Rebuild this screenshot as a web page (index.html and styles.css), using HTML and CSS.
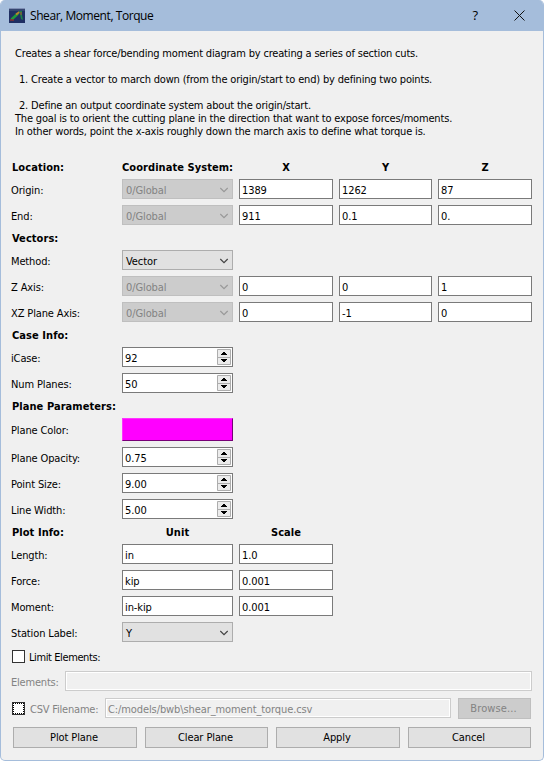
FILE: index.html
```
<!DOCTYPE html>
<html lang="en">
<head>
<meta charset="utf-8">
<title>Shear, Moment, Torque</title>
<link rel="stylesheet" href="styles.css">
</head>
<body>
<svg width="0" height="0" class="defs">
  <symbol id="chev" viewBox="0 0 10 6"><path d="M1.300 1 5 4.700 8.700 1" fill="none" stroke="currentColor" stroke-width="1.200"/></symbol>
  <symbol id="spin" viewBox="0 0 14 16"><path d="M.5.5h13v15H.5zM1 8.5h12" fill="#ececec" stroke="#adadad"/><path d="M6 3h2v1h1v1h1v1H4V5h1V4h1zM4 10h6v1H9v1H8v1H6v-1H5v-1H4z" fill="#000"/></symbol>
</svg>
<div class="window">
  <header class="titlebar">
    <svg class="appicon" width="16" height="15" viewBox="0 0 16 15"><path fill="#1f2f63" d="M0 0h16v15H0z"/><path fill="#7f8fb4" d="M0 0h16v1H0z"/><path fill="#34456f" d="M0 1h16v2H0z"/><path d="M2.500 11.500 9 5.500" stroke="#1f9a3c" stroke-width="2.500"/><path d="M1 12h4" stroke="#8d3030" stroke-width="1.500"/><path d="M7 6.500 10.500 4" stroke="#b9852a" stroke-width="2"/><path d="M10 3h3v4l1 5-2-1-1-5z" fill="#1c8048"/><path d="M12 4v3" stroke="#b04a2c"/></svg>
    <h1>Shear, Moment, Torque</h1>
    <span class="help">?</span>
    <svg class="close" width="11" height="11" viewBox="0 0 11 11"><path d="M.5.5l10 10M10.5.5l-10 10" stroke="#111" fill="none"/></svg>
  </header>
  <section class="intro">
    <p class="l1">Creates a shear force/bending moment diagram by creating a series of section cuts.</p>
    <p class="step">1. Create a vector to march down (from the origin/start to end) by defining two points.</p>
    <p class="step">2. Define an output coordinate system about the origin/start.</p>
    <p>The goal is to orient the cutting plane in the direction that want to expose forces/moments.</p>
    <p>In other words, point the x-axis roughly down the march axis to define what torque is.</p>
  </section>
  <main class="form">
    <div class="row head"><b>Location:</b><b class="cs">Coordinate System:</b><b class="c">X</b><b class="c">Y</b><b class="c">Z</b></div>
    <div class="row"><label>Origin:</label><div class="combo off">0/Global<svg><use href="#chev"/></svg></div><div class="field">1389</div><div class="field">1262</div><div class="field">87</div></div>
    <div class="row"><label>End:</label><div class="combo off">0/Global<svg><use href="#chev"/></svg></div><div class="field">911</div><div class="field">0.1</div><div class="field">0.</div></div>
    <div class="row head"><b>Vectors:</b></div>
    <div class="row"><label>Method:</label><div class="combo">Vector<svg><use href="#chev"/></svg></div></div>
    <div class="row"><label>Z Axis:</label><div class="combo off">0/Global<svg><use href="#chev"/></svg></div><div class="field">0</div><div class="field">0</div><div class="field">1</div></div>
    <div class="row"><label>XZ Plane Axis:</label><div class="combo off">0/Global<svg><use href="#chev"/></svg></div><div class="field">0</div><div class="field">-1</div><div class="field">0</div></div>
    <div class="row head"><b>Case Info:</b></div>
    <div class="row"><label>iCase:</label><div class="field spin">92<svg><use href="#spin"/></svg></div></div>
    <div class="row"><label>Num Planes:</label><div class="field spin">50<svg><use href="#spin"/></svg></div></div>
    <div class="row head"><b>Plane Parameters:</b></div>
    <div class="row tall"><label>Plane Color:</label><div class="swatch"></div></div>
    <div class="row"><label>Plane Opacity:</label><div class="field spin">0.75<svg><use href="#spin"/></svg></div></div>
    <div class="row"><label>Point Size:</label><div class="field spin">9.00<svg><use href="#spin"/></svg></div></div>
    <div class="row"><label>Line Width:</label><div class="field spin">5.00<svg><use href="#spin"/></svg></div></div>
    <div class="row head"><b>Plot Info:</b><b class="c">Unit</b><b class="c">Scale</b></div>
    <div class="row"><label>Length:</label><div class="field">in</div><div class="field">1.0</div></div>
    <div class="row"><label>Force:</label><div class="field">kip</div><div class="field">0.001</div></div>
    <div class="row"><label>Moment:</label><div class="field">in-kip</div><div class="field">0.001</div></div>
    <div class="row"><label>Station Label:</label><div class="combo">Y<svg><use href="#chev"/></svg></div></div>
  </main>
  <div class="line limit"><span class="box"></span><label>Limit Elements:</label></div>
  <div class="line elements"><label>Elements:</label><div class="field dim"></div></div>
  <div class="line csv"><span class="box focus"></span><label>CSV Filename:</label><div class="field dim">C:/models/bwb\shear_moment_torque.csv</div><div class="btn off">Browse...</div></div>
  <footer class="actions"><div class="btn">Plot Plane</div><div class="btn">Clear Plane</div><div class="btn">Apply</div><div class="btn">Cancel</div></footer>
</div>
</body>
</html>
```
FILE: styles.css
```
* { box-sizing: border-box; margin: 0; }
body { background: #fff; font: 11px/13px "DejaVu Sans Condensed", "DejaVu Sans", sans-serif; font-stretch: condensed; color: #000; }
.defs { display: none; }
.window { width: 544px; height: 761px; background: #f0f0f0; border: 1px solid #a5bddb; border-top: 0; border-radius: 5px; overflow: hidden; display: flex; flex-direction: column; white-space: nowrap; letter-spacing: -.2px; }
.titlebar { height: 31px; background: #a5bddb; display: flex; align-items: center; padding: 0 18px 0 8px; flex: none; }
.titlebar h1 { font: 12px/16px "Open Sans", sans-serif; letter-spacing: -.43px; margin-left: 5px; flex: 1; }
.help { font: 13px/16px "Open Sans", sans-serif; margin: -1px 36px 0 0; }
.intro { padding: 16px 14px 0; height: 129px; flex: none; letter-spacing: -.18px; }
.step { padding-left: 4px; }
.l1, .l1 + .step { margin-bottom: 13px; }
.form { display: flex; flex-direction: column; gap: 6px; padding-left: 11px; }
.row { display: grid; grid-template-columns: 104px 111px 94px 93px 94px; column-gap: 6px; height: 20px; align-items: stretch; }
.row label { padding-top: 5px; margin-left: -1px; letter-spacing: -.13px; }
.row.head { height: 13px; }
.head b { padding-top: 1px; letter-spacing: .06px; }
.head b.c { text-align: center; }
.row.tall { height: 23px; }
.row.tall label { padding-top: 6px; }
.combo { border: 1px solid #adadad; background: #e1e1e1; padding: 4px 3px 0; display: flex; justify-content: space-between; letter-spacing: -.1px; }
.combo svg { width: 10px; height: 6px; margin: 3px 0 0; color: #444; }
.combo.off, .btn.off { background: #ccc; border-color: #bfbfbf; color: #838383; }
.combo.off svg { color: #999; }
.field { border: 1px solid #7a7a7a; background: #fff; padding: 4px 2px 0; letter-spacing: -.1px; }
.spin { display: flex; justify-content: space-between; padding-right: 1px; }
.spin svg { width: 14px; height: 16px; margin-top: -3px; }
.swatch { background: #f0f; border: 1px solid #f3f; border-right-color: #707; border-bottom-color: #707; }
.line { display: flex; }
.box { width: 13px; height: 13px; border: 1px solid #333; background: #fff; flex: none; }
.box.focus { outline: 1px dotted #000; outline-offset: -2px; }
.limit { margin: 8px 0 0 11px; height: 13px; }
.limit label { margin-left: 4px; padding-top: 1px; letter-spacing: -.4px; }
.elements { margin: 8px 11px 0 10px; height: 20px; color: #838383; }
.elements label { width: 54px; padding-top: 5px; letter-spacing: -.2px; }
.field.dim { background: #f0f0f0; border-color: #ccc; box-shadow: inset 0 0 0 1px #fff; flex: 1; color: #838383; letter-spacing: -.1px; }
.csv { margin: 7px 12px 0 11px; height: 21px; color: #838383; }
.csv .box { margin-top: 4px; }
.csv label { margin-left: 5px; width: 75px; padding-top: 5px; }
.csv .field { height: 20px; }
.csv .btn { width: 73px; margin-left: 7px; letter-spacing: .1px; }
.btn { border: 1px solid #adadad; background: #e1e1e1; height: 21px; line-height: 20px; text-align: center; padding-right: 2px; letter-spacing: -.1px; }
.actions { display: grid; grid-template-columns: 124px 123px 124px 123px; gap: 8px; margin: 8px 0 0 12px; }
```
